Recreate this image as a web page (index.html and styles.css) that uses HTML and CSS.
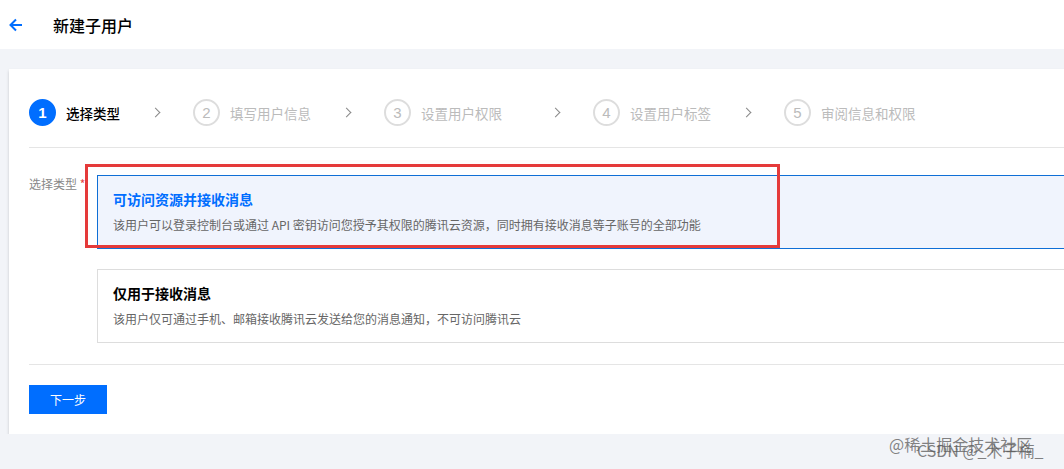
FILE: index.html
```html
<!DOCTYPE html>
<html lang="zh-CN">
<head>
  <meta charset="UTF-8">
  <title>新建子用户</title>
  <link rel="stylesheet" href="styles.css">
</head>
<body>
  <div class="header">
    <svg class="back" width="16" height="16" viewBox="0 0 16 16">
      <path d="M14 8H2.5M8 2.5L2.5 8L8 13.5" fill="none" stroke="#006eff" stroke-width="2"/>
    </svg>
    <h1>新建子用户</h1>
  </div>

  <div class="main">
    <div class="card">
      <div class="steps">
        <div class="step active"><span class="num">1</span><span class="txt">选择类型</span></div>
        <span class="arrow"></span>
        <div class="step"><span class="num">2</span><span class="txt">填写用户信息</span></div>
        <span class="arrow"></span>
        <div class="step wide"><span class="num">3</span><span class="txt">设置用户权限</span></div>
        <span class="arrow"></span>
        <div class="step"><span class="num">4</span><span class="txt">设置用户标签</span></div>
        <span class="arrow"></span>
        <div class="step"><span class="num">5</span><span class="txt">审阅信息和权限</span></div>
      </div>

      <div class="form-row">
        <div class="label">选择类型 <span class="req">*</span></div>
        <div class="options">
          <div class="option selected">
            <div class="opt-title">可访问资源并接收消息</div>
            <div class="opt-desc">该用户可以登录控制台或通过 API 密钥访问您授予其权限的腾讯云资源，同时拥有接收消息等子账号的全部功能</div>
            <div class="mark"></div>
          </div>
          <div class="option">
            <div class="opt-title">仅用于接收消息</div>
            <div class="opt-desc">该用户仅可通过手机、邮箱接收腾讯云发送给您的消息通知，不可访问腾讯云</div>
          </div>
        </div>
      </div>

      <div class="footer">
        <button class="btn">下一步</button>
      </div>
    </div>
  </div>

  <div class="watermark">
    <span class="wm1">@稀土掘金技术社区</span>
    <span class="wm2">CSDN @_木子楠_</span>
  </div>
</body>
</html>
```

FILE: styles.css
```css
body { margin: 0; background: #f2f4f8; overflow: hidden; font-family: "Noto Sans CJK SC", "Noto Sans", sans-serif; color: #000; }
.header { height: 49px; background: #fff; display: flex; align-items: center; padding-left: 8px; }
.back { display: block; }
.header h1 { margin: 0 0 0 29px; font-size: 16px; font-weight: 500; line-height: 22px; }

.main { padding: 20px 0 0 9px; }
.card { width: 1120px; background: #fff; box-shadow: 0 2px 3px rgba(0,0,0,.18); padding: 0 20px 20px; box-sizing: border-box; }

.steps { display: flex; align-items: center; padding: 30px 0 21px; border-bottom: 1px solid #e5e5e5; }
.step { display: flex; align-items: center; }
.num { width: 27px; height: 27px; border-radius: 50%; box-sizing: border-box; border: 2px solid #ddd; color: #bbb; font-size: 15px; display: flex; align-items: center; justify-content: center; font-family: "Liberation Sans", Arial, sans-serif; }
.txt { margin-left: 10px; font-size: 13.5px; color: #bbb; }
.step.wide .txt { padding-right: 18px; }
.step.active .num { background: #006eff; border-color: #006eff; color: #fff; font-weight: bold; }
.step.active .txt { color: #000; font-weight: 500; }
.arrow { width: 6px; height: 6px; border-top: 1.5px solid #888; border-right: 1.5px solid #888; transform: rotate(45deg); margin: 0 34px 0 32px; }

.form-row { display: flex; padding: 27px 0 21px; border-bottom: 1px solid #e5e5e5; }
.label { width: 68px; flex: none; font-size: 12px; line-height: 18px; color: #888; }
.req { color: #e54545; }
.options { flex: 1; display: flex; flex-direction: column; gap: 20px; }
.option { position: relative; border: 1px solid #ddd; padding: 13px 15px 14px; }
.option.selected { border-color: #0f6fd6; background: #f0f4fd; }
.opt-title { font-size: 14px; font-weight: bold; line-height: 20px; }
.option.selected .opt-title { color: #006eff; }
.opt-desc { margin-top: 7px; font-size: 12px; line-height: 18px; color: #666; }
.mark { position: absolute; left: -13px; top: -12px; width: 689px; height: 78px; border: 3px solid #e53a3a; }

.footer { padding-top: 20px; }
.btn { width: 78px; height: 29px; border: 0; background: #006eff; color: #fff; font-size: 12px; font-family: inherit; padding: 0; }

.watermark { position: absolute; left: 889px; top: 432px; width: 170px; height: 30px; color: rgba(90,90,90,.75); font-size: 16px; }
.wm1 { position: absolute; left: 0; top: 0; }
.wm2 { position: absolute; left: 28px; top: 6px; }
```
